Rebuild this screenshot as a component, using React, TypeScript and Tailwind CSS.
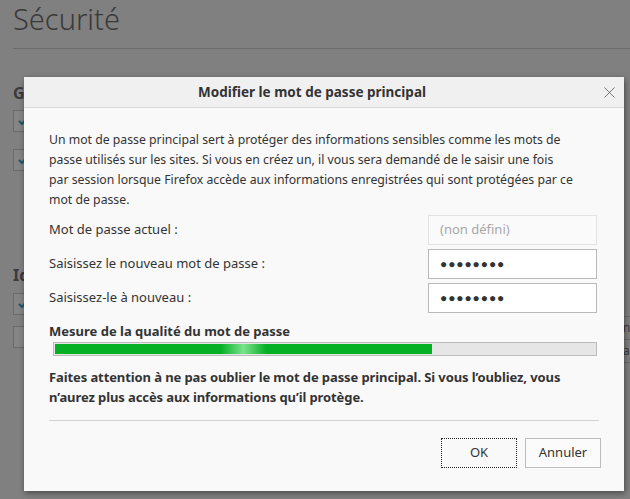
import { X } from 'lucide-react'

function BgCheck({ checked }: { checked: boolean }) {
  return (
    <div className="flex h-[22px] w-[15px] items-center justify-center border border-[#6a6a6a] bg-[#858585]">
      {checked && (
        <svg width="9" height="7" viewBox="0 0 9 7" className="ml-[4px]">
          <path d="M1 3l3 3 4-5" fill="none" stroke="#1f5566" strokeWidth="2" />
        </svg>
      )}
    </div>
  )
}

function PasswordRow({
  label,
  value,
  disabled,
}: {
  label: string
  value: string
  disabled?: boolean
}) {
  return (
    <div className="flex h-[30px] items-center justify-between">
      <span>{label}</span>
      {disabled ? (
        <div className="flex h-[30px] w-[169px] items-center border border-[#e2e2e2] bg-[#fafafa] px-[11px] text-[#a8a8a8]">
          {value}
        </div>
      ) : (
        <div className="flex h-[30px] w-[169px] items-center border border-[#b9b9b9] bg-white px-[11px] text-[12px] tracking-[0.9px] text-[#333]">
          {value}
        </div>
      )}
    </div>
  )
}

export default function App() {
  return (
    <div className="relative h-[499px] w-[630px] overflow-hidden bg-[#808080] font-['Noto_Sans',sans-serif] text-[13px] text-[#333]">
      {/* page behind the dialog */}
      <div className="pl-[13px] pt-[1px] text-[#3a3a3a]">
        <h1 className="text-[29px] leading-[36px] font-light">Sécurité</h1>
        <div className="mt-[11px] h-px bg-[#6c6c6c]" />
        <div className="mt-[34px] text-[16px] font-bold leading-[20px]">G</div>
        <div className="mt-[7px] flex flex-col gap-[17px]">
          <BgCheck checked />
          <BgCheck checked />
        </div>
        <div className="mt-[94px] text-[16px] font-bold leading-[20px]">Id</div>
        <div className="mt-[8px] flex flex-col gap-[11px]">
          <BgCheck checked />
          <BgCheck checked={false} />
        </div>
      </div>
      <div className="absolute right-0 top-[316px] w-[8px] text-[12px] leading-[22px] text-[#3a3a3a]">
        <div className="border-t border-[#6c6c6c] pl-px">n</div>
        <div className="border-y border-[#6c6c6c] pl-px">a</div>
      </div>

      {/* dialog */}
      <div className="absolute left-[24px] top-[77px] flex h-[414px] w-[600px] flex-col bg-[#f9f9f9] shadow-[1px_2px_6px_rgba(0,0,0,0.45)]">
        <div className="relative flex h-[31px] items-center justify-center border-b border-[#d9d9d9] bg-[#f0f0f0] pr-[24px]">
          <span className="text-[13.5px] font-bold text-[#333]">Modifier le mot de passe principal</span>
          <X className="absolute right-[5px] top-[6px] size-[19px] text-[#555]" strokeWidth={1} />
        </div>
        <div className="flex flex-1 flex-col px-[25px] pt-[22px]">
          <p className="whitespace-nowrap text-[12.25px] leading-[20px]">
            Un mot de passe principal sert à protéger des informations sensibles comme les mots de
            <br />
            passe utilisés sur les sites. Si vous en créez un, il vous sera demandé de le saisir une fois
            <br />
            par session lorsque Firefox accède aux informations enregistrées qui sont protégées par ce
            <br />
            mot de passe.
          </p>
          <div className="mt-[5px] mr-[2px] flex flex-col gap-[4px]">
            <PasswordRow label="Mot de passe actuel :" value="(non défini)" disabled />
            <PasswordRow label="Saisissez le nouveau mot de passe :" value="●●●●●●●●" />
            <PasswordRow label="Saisissez-le à nouveau :" value="●●●●●●●●" />
          </div>
          <div className="mt-[9px] font-bold leading-[18px]">Mesure de la qualité du mot de passe</div>
          <div className="mt-[2px] ml-[4px] mr-[2px] h-[14px] border border-[#bcbcbc] bg-[#e6e6e6] p-px">
            <div className="h-full w-[377px] bg-[linear-gradient(90deg,#06b025_0%,#06b025_44%,#7be38e_50%,#06b025_56%,#06b025_100%)]" />
          </div>
          <p className="mt-[11px] whitespace-nowrap font-bold leading-[20px] tracking-[-0.1px]">
            Faites attention à ne pas oublier le mot de passe principal. Si vous l’oubliez, vous
            <br />
            n’aurez plus accès aux informations qu’il protège.
          </p>
          <div className="mt-[13px] h-px bg-[#d0d0d0]" />
          <div className="mt-[17px] flex justify-end gap-[8px]">
            <button className="h-[30px] w-[76px] border border-dotted border-[#222] bg-[#f9f9f9] text-[#333]">
              OK
            </button>
            <button className="-mr-[2px] h-[30px] w-[76px] border border-[#bdbdbd] bg-[#fbfbfb] text-[#333]">
              Annuler
            </button>
          </div>
        </div>
      </div>
    </div>
  )
}
